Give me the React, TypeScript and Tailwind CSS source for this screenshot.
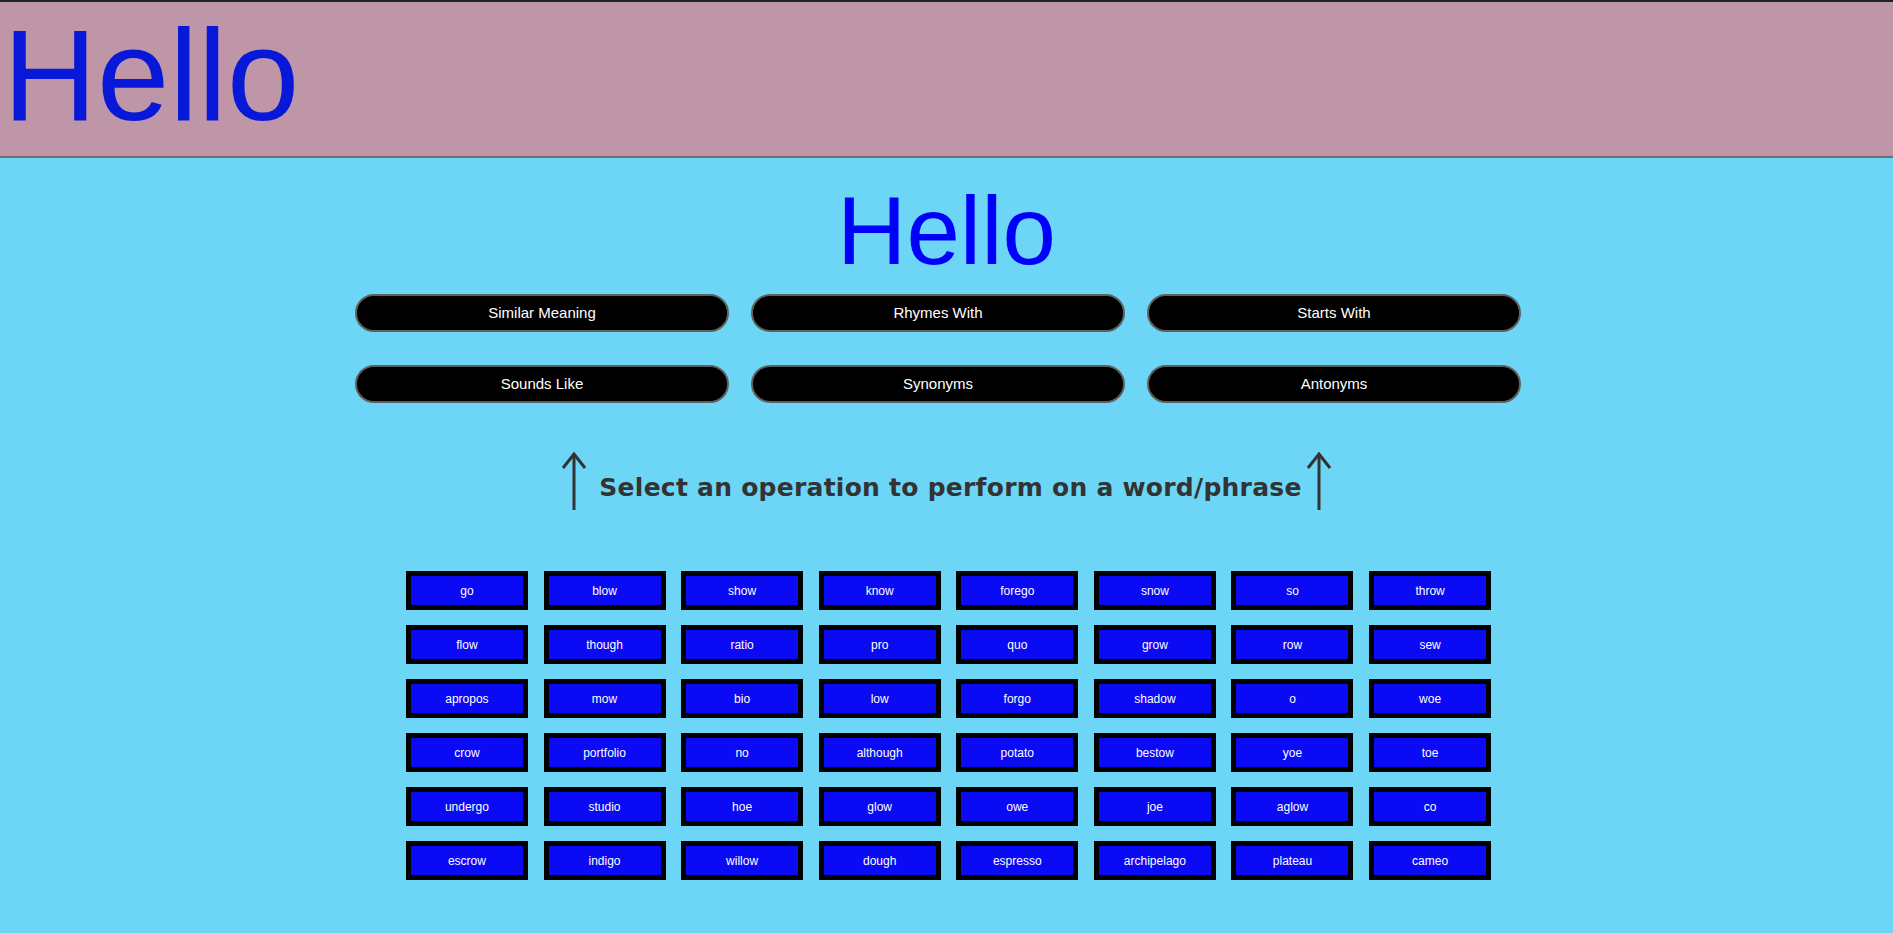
import React from "react";

const ops = [
  "Similar Meaning",
  "Rhymes With",
  "Starts With",
  "Sounds Like",
  "Synonyms",
  "Antonyms",
];

const words = [
  "go", "blow", "show", "know", "forego", "snow", "so", "throw",
  "flow", "though", "ratio", "pro", "quo", "grow", "row", "sew",
  "apropos", "mow", "bio", "low", "forgo", "shadow", "o", "woe",
  "crow", "portfolio", "no", "although", "potato", "bestow", "yoe", "toe",
  "undergo", "studio", "hoe", "glow", "owe", "joe", "aglow", "co",
  "escrow", "indigo", "willow", "dough", "espresso", "archipelago", "plateau", "cameo",
];

function Arrow() {
  return (
    <svg width="24" height="58" viewBox="0 0 24 58" className="shrink-0">
      <line x1="12" y1="2" x2="12" y2="58" stroke="#333333" strokeWidth="3" />
      <polyline points="1,16 12,2 23,16" fill="none" stroke="#333333" strokeWidth="3" />
    </svg>
  );
}

export default function App() {
  return (
    <div
      className="min-h-[933px] w-full bg-[#6dd6f6]"
      style={{ fontFamily: '"Liberation Sans", Arial, sans-serif' }}
    >
      <header className="h-[158px] border-t-2 border-b-2 border-t-[#222222] border-b-[#6f6f6f] bg-[#bf95a8] pl-[3px]">
        <h1 className="text-[130px] leading-[146px] text-[#0818d8]">Hello</h1>
      </header>

      <main className="flex flex-col items-center">
        <h2 className="mt-[18px] text-[96px] leading-[110px] text-[#0000ff]">Hello</h2>

        <div className="mt-[8px] flex w-full justify-center pr-[17px]">
          <div className="grid grid-cols-[374px_374px_374px] gap-x-[22px] gap-y-[33px]">
            {ops.map((o) => (
              <button
                key={o}
                className="h-[38px] rounded-[20px] border-2 border-[#5f5f5f] bg-black text-[15px] text-white"
              >
                {o}
              </button>
            ))}
          </div>
        </div>

        <div className="mt-[49px] flex h-[58px] items-end">
          <Arrow />
          <span
            className="mb-[8px] ml-[13px] mr-[5px] text-[25px] font-bold leading-[29px] tracking-[0.25px] text-[#333333]"
            style={{ fontFamily: '"DejaVu Sans", Verdana, sans-serif' }}
          >
            Select an operation to perform on a word/phrase
          </span>
          <Arrow />
        </div>

        <div className="mt-[61px] ml-[4px] grid grid-cols-[repeat(8,122px)] gap-x-[15.6px] gap-y-[15px]">
          {words.map((w) => (
            <div
              key={w}
              className="flex h-[39px] items-center justify-center border-[5px] border-black bg-[#0a0af5] text-[12px] text-white"
            >
              {w}
            </div>
          ))}
        </div>
      </main>
    </div>
  );
}
